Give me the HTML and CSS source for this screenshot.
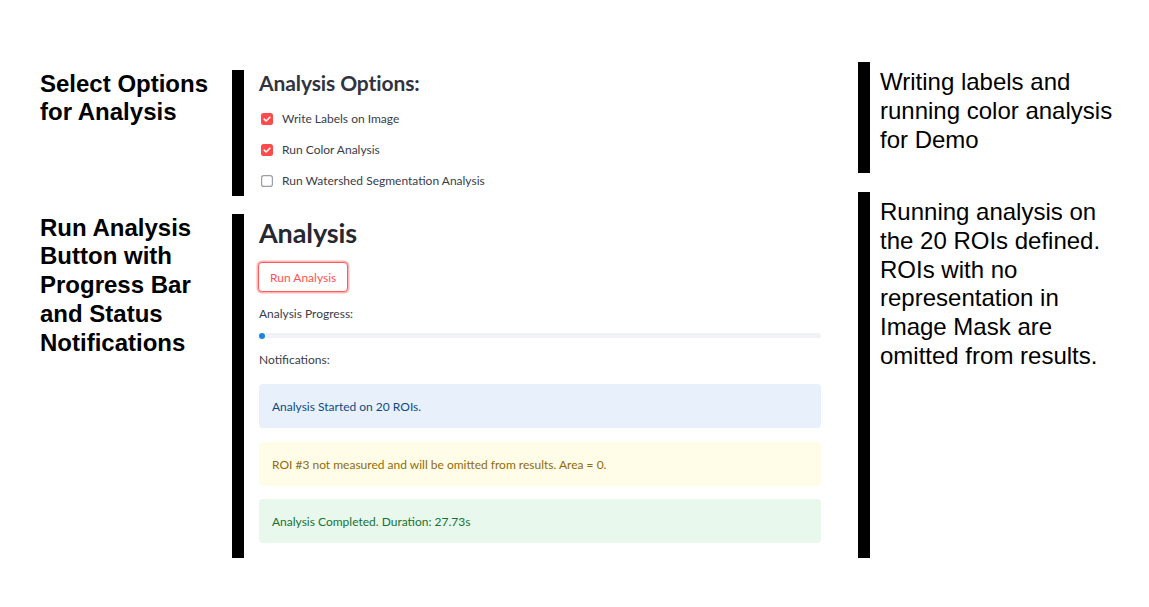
FILE: index.html
```html
<!DOCTYPE html>
<html lang="en">
<head>
<meta charset="utf-8">
<title>Analysis</title>
<link rel="stylesheet" href="styles.css">
</head>
<body>
<div class="slide">
  <div class="grid">
    <div class="caption">Select Options<br>for Analysis</div>
    <section class="panel panel-options">
      <h3 class="opt-title">Analysis Options:</h3>
      <label class="check">
        <svg class="box" viewBox="0 0 12 12" width="12" height="12"><rect x="0" y="0" width="12" height="12" rx="2.5" fill="#ff4b4b"/><path d="M3.2 6.2 L5.1 8 L8.9 4.2" fill="none" stroke="#fff" stroke-width="1.6" stroke-linecap="round" stroke-linejoin="round"/></svg>
        <span>Write Labels on Image</span>
      </label>
      <label class="check">
        <svg class="box" viewBox="0 0 12 12" width="12" height="12"><rect x="0" y="0" width="12" height="12" rx="2.5" fill="#ff4b4b"/><path d="M3.2 6.2 L5.1 8 L8.9 4.2" fill="none" stroke="#fff" stroke-width="1.6" stroke-linecap="round" stroke-linejoin="round"/></svg>
        <span>Run Color Analysis</span>
      </label>
      <label class="check">
        <svg class="box" viewBox="0 0 12 12" width="12" height="12"><rect x="0.6" y="0.6" width="10.8" height="10.8" rx="2.2" fill="#fff" stroke="#9c9fab" stroke-width="1.2"/></svg>
        <span>Run Watershed Segmentation Analysis</span>
      </label>
    </section>

    <div class="caption">Run Analysis<br>Button with<br>Progress Bar<br>and Status<br>Notifications</div>
    <section class="panel panel-run">
      <h2 class="run-title">Analysis</h2>
      <button class="run-btn" type="button">Run Analysis</button>
      <div class="label label-progress">Analysis Progress:</div>
      <div class="track"><div class="fill"></div></div>
      <div class="label label-notes">Notifications:</div>
      <div class="note note-info">Analysis Started on 20 ROIs.</div>
      <div class="note note-warn">ROI #3 not measured and will be omitted from results. Area = 0.</div>
      <div class="note note-ok">Analysis Completed. Duration: 27.73s</div>
    </section>
  </div>

  <div class="side">
    <div class="side-block side-first">Writing labels and<br>running color analysis<br>for Demo</div>
    <div class="side-block side-second">Running analysis on<br>the 20 ROIs defined.<br>ROIs with no<br>representation in<br>Image Mask are<br>omitted from results.</div>
  </div>
</div>
</body>
</html>
```

FILE: styles.css
```css
* { box-sizing: border-box; }
html, body { margin: 0; padding: 0; background: #fff; }
body { width: 1149px; height: 607px; overflow: hidden; }

.slide {
  display: flex;
  align-items: flex-start;
  width: 1149px;
  height: 607px;
}

.grid {
  display: grid;
  grid-template-columns: 192px 589px;
  grid-template-rows: 126px 344px;
  row-gap: 18px;
  padding: 70px 0 0 40px;
}

.caption {
  font-family: "Liberation Sans", Arial, sans-serif;
  font-weight: 700;
  font-size: 24px;
  line-height: 28.8px;
  color: #000;
  margin-top: -0.4px;
}

.panel {
  border-left: 12px solid #000;
  padding-left: 15px;
  font-family: Lato, "Open Sans", sans-serif;
  color: #31333f;
  display: flex;
  flex-direction: column;
  align-items: flex-start;
}

.opt-title {
  margin: 0 0 8px 0;
  font-size: 21px;
  line-height: 25px;
  font-weight: 700;
  color: #31333f;
  letter-spacing: -0.1px;
}

.check {
  display: flex;
  align-items: center;
  height: 32px;
  gap: 9px;
  padding-left: 2px;
  font-size: 12px;
  color: #3a3c48;
}
.check .box { display: block; flex: none; }

.run-title {
  margin: 0;
  font-size: 27px;
  line-height: 38px;
  font-weight: 700;
  color: #262730;
  letter-spacing: -0.1px;
}

.run-btn {
  margin-top: 10px;
  height: 30px;
  padding: 0 11px;
  background: #fff;
  border: 1px solid #ff5c5c;
  box-shadow: 0 0 0 1.5px rgba(255, 90, 90, 0.45);
  border-radius: 4px;
  color: #ff5252;
  font-family: Lato, "Open Sans", sans-serif;
  font-size: 12px;
  cursor: pointer;
  margin-left: -1px;
}

.label {
  font-size: 12px;
  line-height: 20px;
  color: #3a3c48;
}
.label-progress { margin-top: 12px; }
.label-notes { margin-top: 12px; }

.track {
  margin-top: 9px;
  width: 562px;
  height: 5px;
  border-radius: 3px;
  background: #f0f2f6;
  position: relative;
}
.fill {
  position: absolute;
  left: 0;
  top: -0.5px;
  width: 6px;
  height: 6px;
  border-radius: 50%;
  background: #1c83e1;
}

.note {
  width: 562px;
  height: 44px;
  border-radius: 4px;
  padding: 0 13px;
  display: flex;
  align-items: center;
  font-size: 12px;
}
.note-info { margin-top: 14px; background: #e8f1fb; color: #0e4a84; }
.note-warn { margin-top: 14px; background: #fffce8; color: #926c05; }
.note-ok { margin-top: 13px; background: #e8f8ed; color: #177233; }

.side {
  margin-left: 37px;
  padding-top: 62px;
  display: flex;
  flex-direction: column;
  gap: 19px;
}
.side-block {
  border-left: 12px solid #000;
  padding-left: 10px;
  font-family: "Liberation Sans", Arial, sans-serif;
  font-size: 24px;
  line-height: 28.8px;
  color: #000;
  white-space: nowrap;
}
.side-first { height: 111px; padding-top: 6px; }
.side-second { height: 366px; padding-top: 6px; }
```
